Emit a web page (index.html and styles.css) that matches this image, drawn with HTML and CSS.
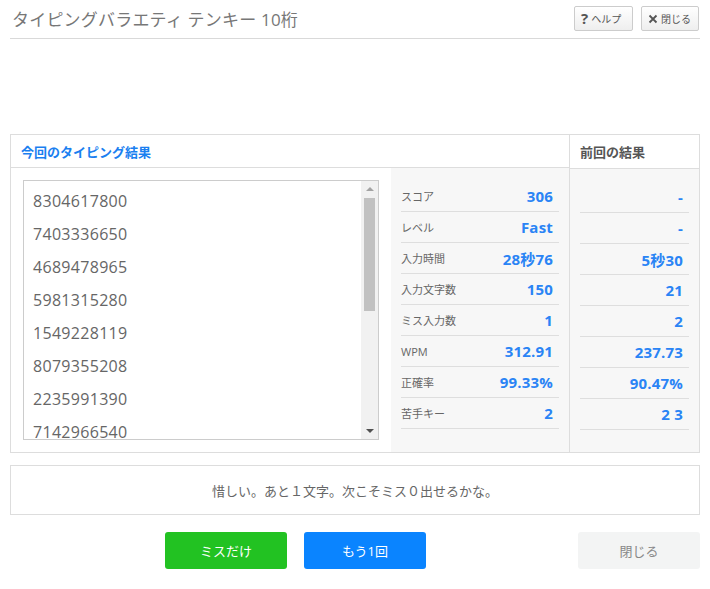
FILE: index.html
```html
<!DOCTYPE html>
<html lang="ja">
<head>
<meta charset="utf-8">
<title>タイピングバラエティ テンキー 10桁</title>
<link rel="stylesheet" href="styles.css">
</head>
<body>
<header class="top">
  <h1 class="title">タイピングバラエティ テンキー 10桁</h1>
  <div class="tools">
    <button class="tool"><span class="q">?</span> ヘルプ</button>
    <button class="tool"><svg class="x" viewBox="0 0 10 10" width="10" height="10"><path d="M1.5 1.5 L8.5 8.5 M8.5 1.5 L1.5 8.5" stroke="#555" stroke-width="1.8" fill="none"/></svg> 閉じる</button>
  </div>
</header>

<section class="result">
  <div class="col current">
    <div class="col-head blue">今回のタイピング結果</div>
    <div class="col-body">
      <div class="list-wrap">
        <div class="list">
          <div class="items">
            <div class="item">8304617800</div>
            <div class="item">7403336650</div>
            <div class="item">4689478965</div>
            <div class="item">5981315280</div>
            <div class="item">1549228119</div>
            <div class="item">8079355208</div>
            <div class="item">2235991390</div>
            <div class="item">7142966540</div>
          </div>
          <div class="scrollbar">
            <div class="arrow up"></div>
            <div class="track"><div class="thumb"></div></div>
            <div class="arrow down"></div>
          </div>
        </div>
      </div>
      <div class="stats">
        <div class="row"><span class="label">スコア</span><span class="val">306</span></div>
        <div class="row"><span class="label">レベル</span><span class="val">Fast</span></div>
        <div class="row"><span class="label">入力時間</span><span class="val">28秒76</span></div>
        <div class="row"><span class="label">入力文字数</span><span class="val">150</span></div>
        <div class="row"><span class="label">ミス入力数</span><span class="val">1</span></div>
        <div class="row"><span class="label">WPM</span><span class="val">312.91</span></div>
        <div class="row"><span class="label">正確率</span><span class="val">99.33%</span></div>
        <div class="row"><span class="label">苦手キー</span><span class="val">2</span></div>
      </div>
    </div>
  </div>
  <div class="col prev">
    <div class="col-head">前回の結果</div>
    <div class="col-body stats prev-stats">
      <div class="row"><span class="val">-</span></div>
      <div class="row"><span class="val">-</span></div>
      <div class="row"><span class="val">5秒30</span></div>
      <div class="row"><span class="val">21</span></div>
      <div class="row"><span class="val">2</span></div>
      <div class="row"><span class="val">237.73</span></div>
      <div class="row"><span class="val">90.47%</span></div>
      <div class="row"><span class="val">2 3</span></div>
    </div>
  </div>
</section>

<div class="message">惜しい。あと１文字。次こそミス０出せるかな。</div>

<div class="actions">
  <button class="btn green">ミスだけ</button>
  <button class="btn blue-btn">もう1回</button>
  <button class="btn gray">閉じる</button>
</div>
</body>
</html>
```

FILE: styles.css
```css
* { box-sizing: border-box; }
html, body { margin: 0; padding: 0; background: #fff; }
body {
  width: 710px;
  font-family: "Open Sans", "Noto Sans CJK JP", sans-serif;
  color: #666;
}
button { font-family: inherit; cursor: pointer; }

.top {
  margin: 0 10px;
  height: 39px;
  border-bottom: 1px solid #d9d9d9;
  display: flex;
  align-items: flex-start;
  justify-content: space-between;
}
.title {
  margin: 6px 0 0 2px;
  font-size: 17px;
  font-weight: normal;
  color: #777;
  letter-spacing: 0.2px;
}
.tools { display: flex; gap: 8px; margin-top: 6px; margin-right: 1px; }
.tool {
  height: 25px;
  padding: 0 6px;
  border: 1px solid #ccc;
  border-radius: 2px;
  background: linear-gradient(#fff, #eee);
  font-size: 10px;
  color: #555;
  display: flex;
  align-items: center;
  gap: 3px;
}
.tool:first-child { width: 59px; }
.tool:last-child { width: 58px; }
.q { font-weight: bold; font-size: 15px; color: #555; line-height: 1; }
.x { display: block; }

.result {
  margin: 95px 10px 0;
  border: 1px solid #ddd;
  display: flex;
  height: 319px;
}
.col { display: flex; flex-direction: column; }
.current { width: 558px; }
.prev { flex: 1; border-left: 1px solid #ddd; }
.col-head {
  height: 34px;
  border-bottom: 1px solid #ddd;
  padding: 0 10px;
  display: flex;
  align-items: center;
  font-size: 13px;
  font-weight: bold;
  color: #555;
  background: #fff;
}
.col-head.blue { color: #1a7ff0; }
.col-body { flex: 1; display: flex; }
.list-wrap { width: 380px; padding: 12px; background: #fff; }
.list {
  height: 260px;
  border: 1px solid #ccc;
  display: flex;
  overflow: hidden;
}
.items { flex: 1; padding: 4px 0 0 9px; overflow: hidden; }
.item { font-size: 16px; line-height: 33px; color: #666; letter-spacing: 0.3px; }
.scrollbar {
  width: 17px;
  background: #f1f1f1;
  display: flex;
  flex-direction: column;
  align-items: center;
}
.arrow { width: 0; height: 0; border-left: 4px solid transparent; border-right: 4px solid transparent; }
.arrow.up { border-bottom: 4px solid #a3a3a3; margin: 6px 0 7px; }
.arrow.down { border-top: 4px solid #505050; margin: 0 0 6px; }
.track { flex: 1; width: 11px; }
.thumb { height: 113px; background: #c1c1c1; }

.stats {
  flex: 1;
  background: #f7f7f7;
  padding: 13px 10px 0;
  display: flex;
  flex-direction: column;
}
.row {
  height: 31px;
  border-bottom: 1px solid #dedede;
  display: flex;
  align-items: center;
  justify-content: space-between;
  padding: 0 6px 0 0;
}
.prev-stats .row { justify-content: flex-end; }
.label { font-size: 11px; color: #666; }
.val { font-size: 15px; font-weight: bold; color: #2a84f5; letter-spacing: 0.2px; }

.message {
  margin: 12px 10px 0;
  height: 50px;
  border: 1px solid #ddd;
  display: flex;
  align-items: center;
  justify-content: center;
  font-size: 13px;
  color: #666;
}

.actions {
  margin: 17px 10px 0;
  display: flex;
  gap: 17px;
}
.btn {
  width: 122px;
  height: 37px;
  border: none;
  border-radius: 3px;
  font-size: 13px;
  color: #fff;
}
.btn.green { background: #22c222; margin-left: 155px; }
.btn.blue-btn { background: #0a84ff; }
.btn.gray { background: #f3f4f4; color: #888; margin-left: auto; }
```
